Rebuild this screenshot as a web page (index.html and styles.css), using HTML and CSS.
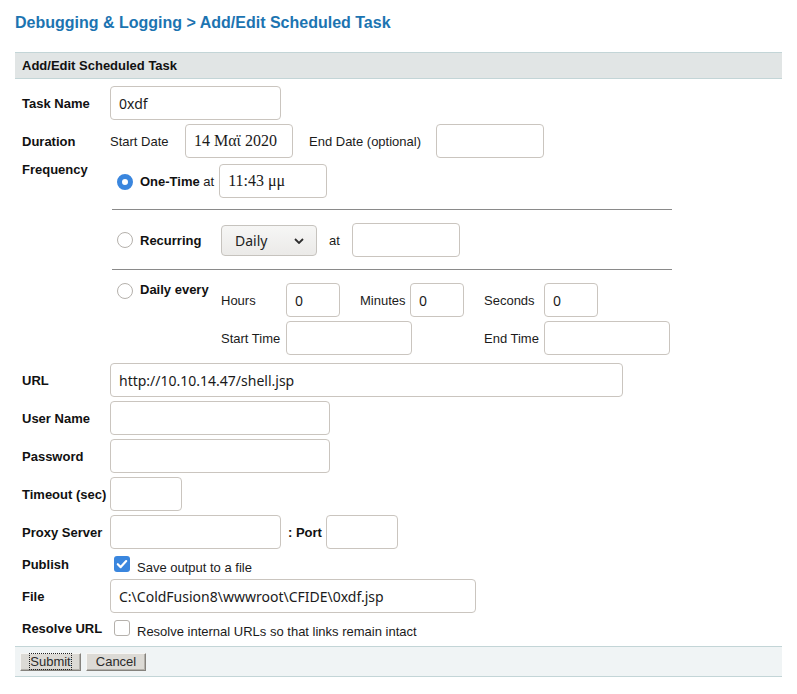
FILE: index.html
```html
<!DOCTYPE html>
<html lang="en">
<head>
<meta charset="utf-8">
<title>Add/Edit Scheduled Task</title>
<link rel="stylesheet" href="styles.css">
</head>
<body>
<div class="page">
  <h1 class="page-title">Debugging &amp; Logging &gt; Add/Edit Scheduled Task</h1>
  <form class="panel">
    <div class="panel-head">Add/Edit Scheduled Task</div>
    <div class="panel-body">
      <div class="lbl">Task Name</div>
      <div class="field"><input type="text" class="txt w171" value="0xdf"></div>

      <div class="lbl">Duration</div>
      <div class="field duration">
        <span class="dur-start">Start Date</span>
        <input type="text" class="txt serif w108" value="14 Μαϊ 2020">
        <span class="dur-end">End Date (optional)</span>
        <input type="text" class="txt w108">
      </div>

      <div class="lbl lbl-top">Frequency</div>
      <div class="freq">
        <div class="freq-row one-time">
          <input type="radio" name="freq" class="radio" checked>
          <span class="opt"><b>One-Time</b> at</span>
          <input type="text" class="txt serif w108 time-in" value="11:43 μμ">
        </div>
        <hr class="sep">
        <div class="freq-row recurring">
          <input type="radio" name="freq" class="radio">
          <b class="opt-name">Recurring</b>
          <span class="select-wrap">
            <select class="select"><option>Daily</option></select>
            <svg class="chev" width="10" height="6" viewBox="0 0 10 6"><path d="M1 1l4 4 4-4" fill="none" stroke="#2e2e2e" stroke-width="1.8"/></svg>
          </span>
          <span class="at">at</span>
          <input type="text" class="txt w108">
        </div>
        <hr class="sep">
        <div class="freq-row daily">
          <input type="radio" name="freq" class="radio">
          <b class="opt-name">Daily every</b>
          <div class="daily-grid">
            <span class="g-l1">Hours</span>
            <input type="text" class="txt w54 g-i1" value="0">
            <span class="g-l2">Minutes</span>
            <input type="text" class="txt w54 g-i2" value="0">
            <span class="g-l3">Seconds</span>
            <input type="text" class="txt w54 g-i3" value="0">
            <span class="g-l1 r2">Start Time</span>
            <input type="text" class="txt w126 g-span r2">
            <span class="g-l3 r2">End Time</span>
            <input type="text" class="txt w126 g-i3 r2">
          </div>
        </div>
      </div>

      <div class="lbl">URL</div>
      <div class="field"><input type="text" class="txt w513" value="http://10.10.14.47/shell.jsp"></div>

      <div class="lbl">User Name</div>
      <div class="field"><input type="text" class="txt w220"></div>

      <div class="lbl">Password</div>
      <div class="field"><input type="password" class="txt w220"></div>

      <div class="lbl">Timeout (sec)</div>
      <div class="field"><input type="text" class="txt w72"></div>

      <div class="lbl">Proxy Server</div>
      <div class="field proxy">
        <input type="text" class="txt w171">
        <b class="port-lbl">: Port</b>
        <input type="text" class="txt w72">
      </div>

      <div class="lbl">Publish</div>
      <div class="field chk-row">
        <span class="check on"><svg width="16" height="16" viewBox="0 0 16 16"><path d="M3.8 8.2l2.9 2.9 5.5-6" fill="none" stroke="#fff" stroke-width="2.2" stroke-linecap="round" stroke-linejoin="round"/></svg></span>
        <span class="chk-text">Save output to a file</span>
      </div>

      <div class="lbl">File</div>
      <div class="field"><input type="text" class="txt w366" value="C:\ColdFusion8\wwwroot\CFIDE\0xdf.jsp"></div>

      <div class="lbl">Resolve URL</div>
      <div class="field chk-row resolve">
        <span class="check"></span>
        <span class="chk-text">Resolve internal URLs so that links remain intact</span>
      </div>
    </div>
    <div class="panel-foot">
      <button type="button" class="btn focus"><span>Submit</span></button>
      <button type="button" class="btn"><span>Cancel</span></button>
    </div>
  </form>
</div>
</body>
</html>
```

FILE: styles.css
```css
html, body {
  margin: 0;
  padding: 0;
  background: #fff;
}

body {
  font-family: "Liberation Sans", Arial, sans-serif;
  font-size: 13px;
  color: #1b1b1b;
}

.page {
  padding: 14px 15px 0 15px;
}

.page-title {
  margin: 0 0 20px 0;
  font-size: 16px;
  line-height: 18px;
  font-weight: bold;
  color: #1c74b1;
}

.panel {
  margin: 0;
}

.panel-head {
  background: #e1e5e5;
  border-top: 1px solid #c3d5d7;
  border-bottom: 1px solid #c3d5d7;
  height: 25px;
  line-height: 25px;
  padding: 0 7px;
  font-weight: bold;
  color: #111;
}

.panel-body {
  display: grid;
  grid-template-columns: 88px 1fr;
  row-gap: 4px;
  align-items: center;
  padding: 7px 0 7px 7px;
}

.lbl {
  font-weight: bold;
  color: #111;
  line-height: 15px;
  white-space: nowrap;
}

.lbl-top {
  align-self: start;
  line-height: 13px;
  padding-top: 1px;
}

.field {
  display: flex;
  align-items: center;
}

.txt {
  box-sizing: border-box;
  height: 34px;
  margin: 0;
  border: 1px solid #cac5bf;
  border-radius: 4px;
  padding: 0 8px;
  background: #fff;
  font-family: "Noto Sans", "DejaVu Sans", sans-serif;
  font-size: 14px;
  color: #1a1a1a;
  outline: none;
}

.serif {
  font-family: "Liberation Serif", "DejaVu Serif", serif;
  font-size: 16px;
}

.w54 { width: 54px; }
.w72 { width: 72px; }
.w108 { width: 108px; }
.w126 { width: 126px; }
.w171 { width: 171px; }
.w220 { width: 220px; }
.w366 { width: 366px; }
.w513 { width: 513px; }

.dur-start {
  width: 75px;
}

.dur-end {
  width: 127px;
  margin-left: 16px;
}

/* Frequency block */
.freq {
  padding: 2px 0 4px 2px;
  align-self: start;
}

.sep {
  width: 560px;
  margin: 11px 0 12px 0;
  border: 0;
  height: 1px;
  background: #8a8a8a;
}

.freq-row {
  display: flex;
  align-items: center;
}

.one-time {
  height: 34px;
}

.recurring {
  height: 36px;
}

.daily {
  align-items: flex-start;
}

.radio {
  -webkit-appearance: none;
  appearance: none;
  box-sizing: border-box;
  width: 16px;
  height: 16px;
  margin: 0 7px 0 5px;
  border: 1px solid #b5b1ac;
  border-radius: 50%;
  background: #fff;
  flex: none;
}

.radio:checked {
  border: 5px solid #3a86de;
}

.one-time .radio {
  margin-top: 2px;
}

.daily .radio {
  margin-top: 1px;
}

.opt b {
  color: #111;
}

.time-in {
  margin-left: 5px;
}

.opt-name {
  width: 81px;
  color: #111;
  line-height: 15px;
  white-space: nowrap;
}

.select-wrap {
  position: relative;
  display: inline-flex;
}

.select {
  -webkit-appearance: none;
  appearance: none;
  box-sizing: border-box;
  width: 96px;
  height: 31px;
  margin: 0;
  padding: 0 0 0 13px;
  border: 1px solid #c6c3be;
  border-radius: 4px;
  background: linear-gradient(#f6f6f5, #ebeae8);
  font-family: "Noto Sans", "DejaVu Sans", sans-serif;
  font-size: 14px;
  color: #222;
  outline: none;
}

.chev {
  position: absolute;
  right: 13px;
  top: 13px;
  pointer-events: none;
}

.at {
  margin: 0 12px;
}

.daily-grid {
  display: grid;
  grid-template-columns: 65px 54px 20px 50px 54px 20px 60px 126px;
  grid-auto-rows: 34px;
  row-gap: 4px;
  align-items: center;
  margin-top: 1px;
}

.g-l1 { grid-column: 1; grid-row: 1; }
.g-i1 { grid-column: 2; grid-row: 1; }
.g-l2 { grid-column: 4; grid-row: 1; }
.g-i2 { grid-column: 5; grid-row: 1; }
.g-l3 { grid-column: 7; grid-row: 1; }
.g-i3 { grid-column: 8; grid-row: 1; justify-self: start; }
.g-span { grid-column: 2 / 5; grid-row: 2; }
.daily-grid .r2 { grid-row: 2; }

/* Proxy */
.port-lbl {
  margin: 0 4px 0 7px;
  color: #111;
}

/* Checkbox rows */
.chk-row {
  height: 22px;
  align-items: stretch;
}

.check {
  box-sizing: border-box;
  width: 16px;
  height: 16px;
  margin-left: 4px;
  border: 1px solid #b5b1ac;
  border-radius: 3px;
  background: #fff;
  align-self: center;
  display: flex;
  flex: none;
}

.check.on {
  border: 0;
  background: #3a86de;
}

.resolve .check {
  align-self: flex-start;
  margin-top: 3px;
}

.chk-text {
  margin-left: 7px;
  align-self: flex-end;
  line-height: 15px;
  white-space: nowrap;
}

/* Footer */
.panel-foot {
  display: flex;
  gap: 5px;
  background: #f0f4f5;
  border-top: 1px solid #c3d5d7;
  border-bottom: 1px solid #c3d5d7;
  padding: 6px 5px 5px 5px;
}

.btn {
  box-sizing: border-box;
  height: 18px;
  margin: 0;
  padding: 0 8px;
  border: 1px solid;
  border-color: #f7f6f4 #85827d #85827d #f7f6f4;
  box-shadow: inset -1px -1px 0 #b3b0aa;
  background: #dcdad5;
  font-family: "Liberation Sans", Arial, sans-serif;
  font-size: 13px;
  line-height: 14px;
  color: #2b2b2b;
  width: 61px;
}

.btn.focus span {
  outline: 1px dotted #222;
  outline-offset: 0;
}

.btn + .btn {
  width: 60px;
}
```
